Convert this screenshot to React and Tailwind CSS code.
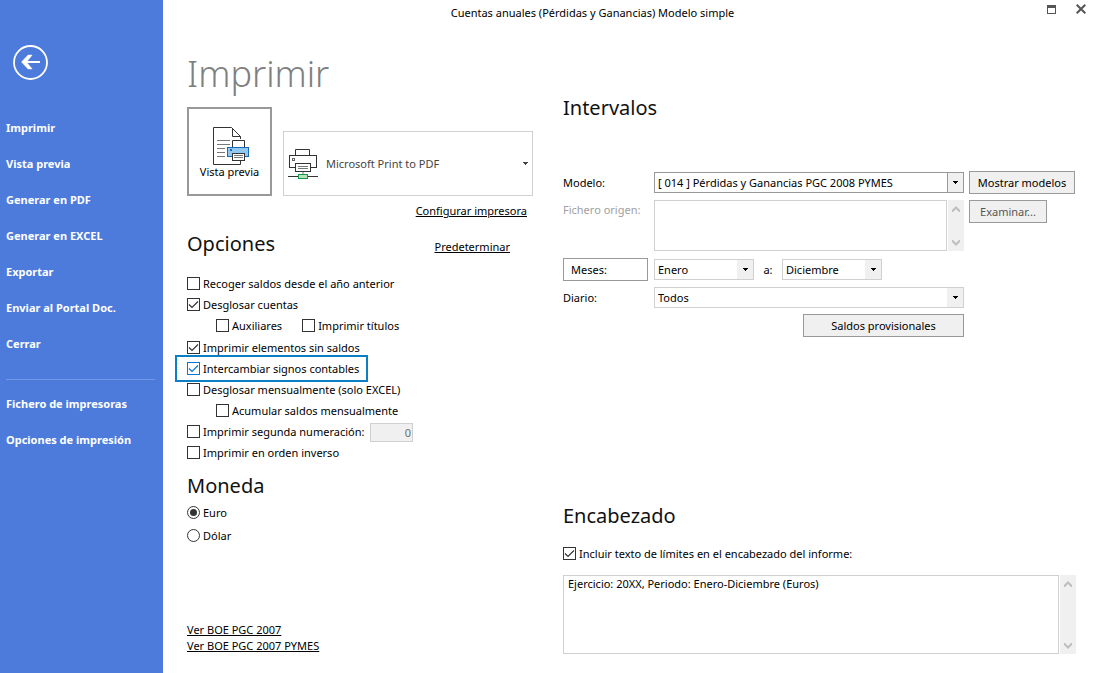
import React, { useState } from 'react';

const menuItems = ['Imprimir', 'Vista previa', 'Generar en PDF', 'Generar en EXCEL', 'Exportar', 'Enviar al Portal Doc.', 'Cerrar'];
const setupItems = ['Fichero de impresoras', 'Opciones de impresión'];

const SidebarLink = ({ children }) => (
    <a href="#" className="flex h-9 items-center text-[11px] font-bold text-white hover:underline">
        {children}
    </a>
);

const BackIcon = () => (
    <svg className="h-[35px] w-[35px]" viewBox="0 0 35 35" fill="none" stroke="white">
        <circle cx="17.5" cy="17.5" r="16.5" strokeWidth="1.8" />
        <path d="M12 17H27" strokeWidth="2" />
        <path d="M8.5 17L15 10H19.2L13.6 17L19.2 24H15Z" fill="white" strokeWidth="0.4" />
    </svg>
);

const PreviewIcon = () => (
    <svg className="ml-0.5 h-[38px] w-[36px]" viewBox="0 0 36 38" fill="none" stroke="#333333">
        <path d="M27.5 12V9.5L18.5 0.5H0.5V37.5H27.5V33" fill="white" />
        <path d="M19.5 1V9.5H27.5" />
        <path d="M4 13.5H17M4 17.5H17M4 21.5H12M4 25.5H12M4 29.5H12" stroke="#777777" />
        <path d="M19.5 20V13.5H31.5V20" fill="white" />
        <rect x="14.5" y="20.5" width="21" height="9" fill="#92c8f0" stroke="#1769b3" />
        <rect x="17" y="22" width="2" height="2" fill="#1769b3" stroke="none" />
        <rect x="19.5" y="26.5" width="12" height="7" fill="white" />
        <path d="M21 28.5H30M21 30.5H30" stroke="#777777" />
    </svg>
);

const PrinterIcon = () => (
    <svg className="h-[30px] w-[30px]" viewBox="0 0 30 30" fill="none" stroke="#333333">
        <path d="M7.5 6V0.5H21.5V6" fill="white" />
        <rect x="1.5" y="6.5" width="27" height="12" fill="white" />
        <rect x="4.5" y="9.5" width="2" height="2" stroke="#666666" />
        <rect x="7.5" y="14.5" width="15" height="8" fill="white" />
        <path d="M10 17.5H20M10 19.5H20" stroke="#777777" />
        <path d="M15 23V25" stroke="#bbbbbb" strokeWidth="2" />
        <path d="M0 27.5H30" />
        <rect x="10.5" y="25.5" width="9" height="4" fill="#b5dfbd" stroke="#179848" />
    </svg>
);

const Caret = () => (
    <svg className="h-[3px] w-[5px]" viewBox="0 0 5 3" shapeRendering="crispEdges">
        <path d="M0 0H5V1H4V2H3V3H2V2H1V1H0Z" fill="currentColor" />
    </svg>
);

const Check = ({ children, defaultChecked, blue }) => (
    <label className="flex h-[21px] items-center gap-[3px] whitespace-nowrap">
        <span className="relative flex">
            <input
                type="checkbox"
                defaultChecked={defaultChecked}
                className={`peer h-[13px] w-[13px] appearance-none border bg-white ${blue ? 'border-[#0078d7]' : 'border-[#333333]'}`}
            />
            <svg
                className={`pointer-events-none absolute inset-0 hidden h-[13px] w-[13px] peer-checked:block ${blue ? 'text-[#0078d7]' : 'text-[#333333]'}`}
                viewBox="0 0 13 13"
                fill="none"
                stroke="currentColor"
            >
                <path d="M2 6.5L5 9.5L11 3.5" strokeWidth="1.2" />
            </svg>
        </span>
        {children}
    </label>
);

const Radio = ({ children, defaultChecked }) => (
    <label className="flex h-[23px] items-center gap-[3px]">
        <span className="relative flex">
            <input
                type="radio"
                name="moneda"
                defaultChecked={defaultChecked}
                className="peer h-[13px] w-[13px] appearance-none rounded-full border border-[#333333] bg-white"
            />
            <span className="pointer-events-none absolute inset-[3px] hidden rounded-full bg-[#333333] peer-checked:block" />
        </span>
        {children}
    </label>
);

const Select = ({ id, label, options, className, strong }) => (
    <div className={`relative h-[21px] ${className}`}>
        <select
            id={id}
            aria-label={label}
            className={`h-full w-full appearance-none border bg-white pr-5 pl-[3px] ${strong ? 'border-[#999999]' : 'border-[#d0d0d0]'}`}
        >
            {options.map((option) => (
                <option key={option}>{option}</option>
            ))}
        </select>
        <span
            className={`pointer-events-none absolute inset-y-px right-px flex w-4 items-center justify-center bg-[#f0f0f0] ${strong ? 'border-l border-[#999999]' : ''}`}
        >
            <Caret />
        </span>
    </div>
);

const Button = ({ children, className }) => (
    <button className={`h-[23px] border border-[#999999] whitespace-nowrap ${className}`}>{children}</button>
);

const ScrollBar = () => (
    <div className="flex w-4 shrink-0 flex-col items-center justify-between bg-[#f0f0f0] pt-1.5 pb-[5px] text-[#bfbfbf]">
        <svg className="h-[6px] w-[8px]" viewBox="0 0 8 6">
            <path d="M4 0L8 4V6H7L4 3L1 6H0V4Z" fill="currentColor" />
        </svg>
        <svg className="h-[6px] w-[8px]" viewBox="0 0 8 6">
            <path d="M4 6L8 2V0H7L4 3L1 0H0V2Z" fill="currentColor" />
        </svg>
    </div>
);

const SectionTitle = ({ children }) => <h2 className="text-[20px] leading-[28px] text-[#111111]">{children}</h2>;

const App = () => {
    const [encabezado, setEncabezado] = useState('Ejercicio: 20XX, Periodo: Enero-Diciembre (Euros)');

    return (
        <div className="flex min-h-screen bg-white font-['Noto_Sans','Open_Sans',sans-serif] text-[11px] leading-4 text-black">
            {/* Sidebar */}
            <aside className="w-[163px] shrink-0 bg-[#4d7bdb] pt-[45px]">
                <button aria-label="Volver" className="ml-[13px] block">
                    <BackIcon />
                </button>
                <nav className="mt-[30px] pl-1.5">
                    {menuItems.map((item) => (
                        <SidebarLink key={item}>{item}</SidebarLink>
                    ))}
                    <hr className="mt-[17px] mr-2 mb-1.5 border-[#7398e6]" />
                    {setupItems.map((item) => (
                        <SidebarLink key={item}>{item}</SidebarLink>
                    ))}
                </nav>
            </aside>

            <div className="flex min-w-0 flex-1 flex-col">
                {/* Title bar */}
                <header className="flex h-[26px] items-center">
                    <div className="flex-1 text-center">Cuentas anuales (Pérdidas y Ganancias) Modelo simple</div>
                    <div className="flex w-[72px] items-start justify-end gap-5 self-start pt-1 pr-2 text-[#555555]">
                        <button aria-label="Maximizar">
                            <svg className="h-[10px] w-[9px]" viewBox="0 0 9 10" fill="none" stroke="currentColor">
                                <path d="M0 2.5H9" strokeWidth="3" />
                                <rect x="0.5" y="1.5" width="8" height="8" />
                            </svg>
                        </button>
                        <button aria-label="Cerrar">
                            <svg className="h-[10px] w-[10px]" viewBox="0 0 10 10" fill="none" stroke="currentColor">
                                <path d="M0.7 0.7L9.3 9.3M9.3 0.7L0.7 9.3" strokeWidth="2" />
                            </svg>
                        </button>
                    </div>
                </header>

                <main className="flex flex-1 gap-[30px] pr-[18px] pb-[19px] pl-6">
                    <div className="flex w-[346px] shrink-0 flex-col pt-6">
                        <h1 className="text-[36px] leading-[48px] font-light text-[#808080]">Imprimir</h1>

                        {/* Printer */}
                        <div className="mt-[9px] flex items-end gap-[11px]">
                            <button className="flex h-[89px] w-[85px] flex-col items-center border-2 border-[#999999] pt-[18px]">
                                <PreviewIcon />
                                <span className="leading-[14px]">Vista previa</span>
                            </button>
                            <div className="relative h-[65px] flex-1 text-[#444444]">
                                <select
                                    aria-label="Impresora"
                                    className="h-full w-full appearance-none border border-[#d0d0d0] bg-white pl-[42px]"
                                >
                                    <option>Microsoft Print to PDF</option>
                                </select>
                                <span className="pointer-events-none absolute inset-y-0 left-[5px] flex items-center">
                                    <PrinterIcon />
                                </span>
                                <span className="pointer-events-none absolute inset-y-0 right-[5px] flex items-center">
                                    <Caret />
                                </span>
                            </div>
                        </div>
                        <a href="#" className="mt-[7px] mr-1.5 self-end underline">Configurar impresora</a>

                        {/* Opciones */}
                        <div className="mt-[11px] flex items-end justify-between pr-[23px]">
                            <SectionTitle>Opciones</SectionTitle>
                            <a href="#" className="mb-[3px] underline">Predeterminar</a>
                        </div>
                        <div className="mt-[15px]">
                            <Check>Recoger saldos desde el año anterior</Check>
                            <Check defaultChecked>Desglosar cuentas</Check>
                            <div className="mb-px flex gap-5 pl-[29px]">
                                <Check>Auxiliares</Check>
                                <Check>Imprimir títulos</Check>
                            </div>
                            <Check defaultChecked>Imprimir elementos sin saldos</Check>
                            <div className="relative">
                                <Check defaultChecked blue>Intercambiar signos contables</Check>
                                <div className="pointer-events-none absolute -inset-y-[3px] -left-3 w-[193px] border-2 border-[#0a80c4]" />
                            </div>
                            <Check>Desglosar mensualmente (solo EXCEL)</Check>
                            <div className="pl-[29px]">
                                <Check>Acumular saldos mensualmente</Check>
                            </div>
                            <div className="flex">
                                <div className="w-[183px]">
                                    <Check>Imprimir segunda numeración:</Check>
                                </div>
                                <input
                                    aria-label="Segunda numeración"
                                    defaultValue="0"
                                    disabled
                                    className="h-[19px] w-[43px] self-end border border-[#d0d0d0] bg-[#f0f0f0] pr-px text-right text-[#6d6d6d]"
                                />
                            </div>
                            <Check>Imprimir en orden inverso</Check>
                        </div>

                        {/* Moneda */}
                        <div className="mt-[9px]">
                            <SectionTitle>Moneda</SectionTitle>
                            <div className="mt-px">
                                <Radio defaultChecked>Euro</Radio>
                                <Radio>Dólar</Radio>
                            </div>
                        </div>

                        <div className="mt-auto flex flex-col items-start">
                            <a href="#" className="underline">Ver BOE PGC 2007</a>
                            <a href="#" className="underline">Ver BOE PGC 2007 PYMES</a>
                        </div>
                    </div>

                    <div className="flex min-w-0 flex-1 flex-col pt-[68px]">
                        {/* Intervalos */}
                        <SectionTitle>Intervalos</SectionTitle>
                        <div className="mt-[49px] grid grid-cols-[91px_1fr_112px] items-center gap-y-[5px]">
                            <label htmlFor="modelo">Modelo:</label>
                            <Select id="modelo" strong options={['[ 014 ] Pérdidas y Ganancias PGC 2008 PYMES']} />
                            <div className="pl-[5px]">
                                <Button className="w-[106px] bg-[#f0f0f0]">Mostrar modelos</Button>
                            </div>

                            <label htmlFor="fichero" className="self-start pt-[3px] text-[#a0a0a0]">Fichero origen:</label>
                            <div className="my-px flex h-[51px] gap-px">
                                <textarea id="fichero" disabled className="flex-1 resize-none border border-[#d0d0d0] bg-white" />
                                <ScrollBar />
                            </div>
                            <div className="self-start pt-px pl-[5px]">
                                <Button className="w-[78px] bg-[#f0f0f0] text-[#555555]">Examinar...</Button>
                            </div>

                            <Button className="mt-px mr-1.5 bg-white pl-[7px] text-left">Meses:</Button>
                            <div className="col-span-2 mt-px flex items-center">
                                <Select label="Mes inicial" className="w-[100px]" options={['Enero']} />
                                <span className="w-7 text-center">a:</span>
                                <Select label="Mes final" className="w-[100px]" options={['Diciembre']} />
                            </div>

                            <label htmlFor="diario" className="leading-[23px]">Diario:</label>
                            <Select id="diario" options={['Todos']} />

                            <Button className="col-start-2 w-[161px] justify-self-end bg-[#f0f0f0]">Saldos provisionales</Button>
                        </div>

                        {/* Encabezado */}
                        <div className="mt-auto">
                            <SectionTitle>Encabezado</SectionTitle>
                            <div className="mt-[13px]">
                                <Check defaultChecked>Incluir texto de límites en el encabezado del informe:</Check>
                            </div>
                            <div className="mt-[11px] flex h-[79px] gap-px">
                                <textarea
                                    aria-label="Texto del encabezado"
                                    value={encabezado}
                                    onChange={(e) => setEncabezado(e.target.value)}
                                    className="flex-1 resize-none border border-[#d0d0d0] bg-white px-1"
                                />
                                <ScrollBar />
                            </div>
                        </div>
                    </div>
                </main>
            </div>
        </div>
    );
};

export default App;
